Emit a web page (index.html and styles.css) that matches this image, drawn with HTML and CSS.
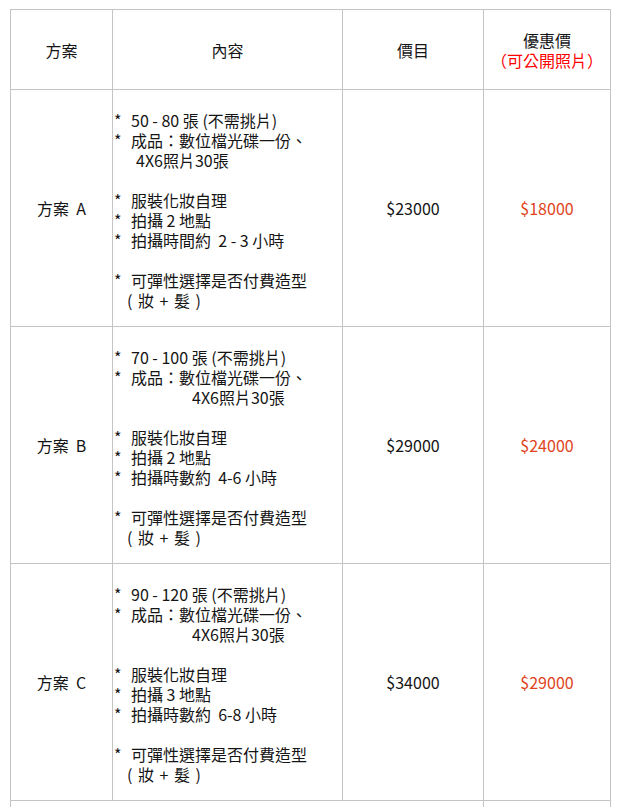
FILE: index.html
```html
<!DOCTYPE html>
<html lang="zh-Hant">
<head>
<meta charset="utf-8">
<title>方案價目</title>
<link rel="stylesheet" href="styles.css">
</head>
<body>
<table class="price-table">
  <colgroup>
    <col class="c-plan">
    <col class="c-content">
    <col class="c-price">
    <col class="c-sale">
  </colgroup>
  <thead>
    <tr>
      <th>方案</th>
      <th>內容</th>
      <th>價目</th>
      <th>優惠價<br><span class="red">（可公開照片）</span></th>
    </tr>
  </thead>
  <tbody>
    <tr>
      <td class="plan">方案&nbsp; A</td>
      <td class="content">
        <div class="item"><span class="star">*</span><span>50 - 80 張 (不需挑片)</span></div>
        <div class="item"><span class="star">*</span><span>成品：數位檔光碟一份、</span></div>
        <div class="cont short">4X6照片30張</div>
        <div class="blank"></div>
        <div class="item"><span class="star">*</span><span>服裝化妝自理</span></div>
        <div class="item"><span class="star">*</span><span>拍攝 2 地點</span></div>
        <div class="item"><span class="star">*</span><span>拍攝時間約&nbsp; 2 - 3 小時</span></div>
        <div class="blank"></div>
        <div class="item"><span class="star">*</span><span>可彈性選擇是否付費造型</span></div>
        <div class="paren">( 妝 + 髮 )</div>
      </td>
      <td class="price">$23000</td>
      <td class="sale">$18000</td>
    </tr>
    <tr>
      <td class="plan">方案&nbsp; B</td>
      <td class="content">
        <div class="item"><span class="star">*</span><span>70 - 100 張 (不需挑片)</span></div>
        <div class="item"><span class="star">*</span><span>成品：數位檔光碟一份、</span></div>
        <div class="cont long">4X6照片30張</div>
        <div class="blank"></div>
        <div class="item"><span class="star">*</span><span>服裝化妝自理</span></div>
        <div class="item"><span class="star">*</span><span>拍攝 2 地點</span></div>
        <div class="item"><span class="star">*</span><span>拍攝時數約&nbsp; 4-6 小時</span></div>
        <div class="blank"></div>
        <div class="item"><span class="star">*</span><span>可彈性選擇是否付費造型</span></div>
        <div class="paren">( 妝 + 髮 )</div>
      </td>
      <td class="price">$29000</td>
      <td class="sale">$24000</td>
    </tr>
    <tr>
      <td class="plan">方案&nbsp; C</td>
      <td class="content">
        <div class="item"><span class="star">*</span><span>90 - 120 張 (不需挑片)</span></div>
        <div class="item"><span class="star">*</span><span>成品：數位檔光碟一份、</span></div>
        <div class="cont long">4X6照片30張</div>
        <div class="blank"></div>
        <div class="item"><span class="star">*</span><span>服裝化妝自理</span></div>
        <div class="item"><span class="star">*</span><span>拍攝 3 地點</span></div>
        <div class="item"><span class="star">*</span><span>拍攝時數約&nbsp; 6-8 小時</span></div>
        <div class="blank"></div>
        <div class="item"><span class="star">*</span><span>可彈性選擇是否付費造型</span></div>
        <div class="paren">( 妝 + 髮 )</div>
      </td>
      <td class="price">$34000</td>
      <td class="sale">$29000</td>
    </tr>
    <tr class="extra">
      <td colspan="3">&nbsp;</td>
      <td>&nbsp;</td>
    </tr>
  </tbody>
</table>
</body>
</html>
```

FILE: styles.css
```css
html, body {
  margin: 0;
  padding: 0;
  background: #ffffff;
}

body {
  font-family: "Noto Sans CJK TC", "Noto Sans", sans-serif;
  font-size: 16px;
  line-height: 20px;
  color: #151515;
}

.price-table {
  margin: 9px 0 0 10px;
  width: 600px;
  table-layout: fixed;
  border-collapse: collapse;
}

.c-plan { width: 102px; }
.c-content { width: 230px; }
.c-price { width: 141px; }
.c-sale { width: 127px; }

.price-table th,
.price-table td {
  border: 1px solid #c4c4c4;
  vertical-align: middle;
  text-align: center;
  padding: 0;
}

.price-table th {
  font-weight: normal;
  height: 79px;
}

.red {
  color: #ff0000;
}

.price-table td.content {
  text-align: left;
  padding: 20px 0 16px 1px;
}

.item {
  display: flex;
}

.star {
  width: 17px;
  flex: none;
}

.cont.short { padding-left: 22px; }
.cont.long { padding-left: 78px; }

.blank { height: 20px; }

.paren {
  padding-left: 13px;
  word-spacing: 2px;
}

.sale {
  color: #e0441c;
}

.extra td {
  height: 60px;
}
```
